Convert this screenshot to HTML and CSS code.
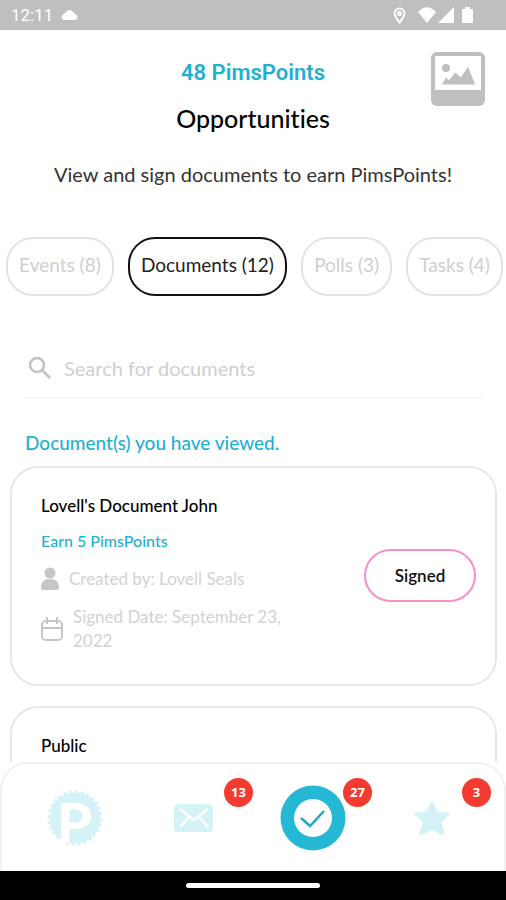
FILE: index.html
```html
<!DOCTYPE html>
<html lang="en">
<head>
    <meta charset="UTF-8">
    <meta name="viewport" content="width=device-width, initial-scale=1.0">
    <title>Opportunities</title>
    <link rel="stylesheet" href="styles.css">
</head>
<body>
    <div class="status-bar">
        <span class="clock">12:11</span>
        <svg class="cloud" width="17" height="12" viewBox="0 0 17 12" fill="#fff"><path d="M3 11a3 3 0 0 1-.5-5.800L6 2q2.500-2 5 0l3.500 3.200A3 3 0 0 1 14 11z"/></svg>
        <div class="status-icons">
            <svg width="13" height="17" viewBox="0 0 13 17" fill="none" stroke="#fff" stroke-width="2"><path d="M6.500 15.500C3.500 11.500 1.500 9 1.500 6.500a5 5 0 0 1 10 0c0 2.500-2 5-5 9z"/><circle cx="6.500" cy="6.500" r="1.500"/></svg>
            <svg class="wifi" width="18" height="17" viewBox="0 0 18 17" fill="#fff"><path d="M0 5q9-9.500 18 0L9 16z"/></svg>
            <svg width="16" height="17" viewBox="0 0 16 17" fill="#fff"><path d="M16 0v16H0z"/></svg>
            <svg class="battery" width="11" height="17" viewBox="0 0 11 17" fill="#fff"><path d="M3 2V0h5v2h2q1 0 1 1v12q0 1-1 1H1q-1 0-1-1V3q0-1 1-1z"/></svg>
        </div>
    </div>

    <main class="content">
        <header class="header">
            <div class="heading">
                <p class="points">48 PimsPoints</p>
                <h1>Opportunities</h1>
            </div>
            <button class="photo" type="button" aria-label="Photo">
                <svg width="54" height="54" viewBox="0 0 54 54"><rect width="54" height="54" rx="6" fill="#bfbfbf"/><path d="M4 4h46v34H4z" fill="#fff"/><circle cx="15" cy="16" r="4" fill="#bfbfbf"/><path d="M11 32.500l4-7 3 3 6-8 6 5 7-11 7 18z" fill="#bfbfbf"/></svg>
            </button>
        </header>
        <p class="intro">View and sign documents to earn PimsPoints!</p>

        <div class="tabs">
            <button class="tab" type="button">Events (8)</button>
            <button class="tab active" type="button">Documents (12)</button>
            <button class="tab" type="button">Polls (3)</button>
            <button class="tab" type="button">Tasks (4)</button>
        </div>

        <div class="search">
            <label for="search" aria-label="Search for documents">
                <svg width="24" height="24" viewBox="0 0 24 24" fill="none" stroke="#c2c2c2" stroke-width="2.500"><circle cx="9" cy="9" r="7"/><path d="M14 14l8 8"/></svg>
            </label>
            <input id="search" type="text" placeholder="Search for documents">
        </div>

        <h2>Document(s) you have viewed.</h2>

        <div class="card">
            <div class="details">
                <h3>Lovell's Document John</h3>
                <p class="earn">Earn 5 PimsPoints</p>
                <p class="meta">
                    <svg width="18" height="24" viewBox="0 0 18 24" fill="#c6c6c6"><circle cx="9" cy="6" r="5.500"/><path d="M0 21c0-6 3-9 9-9s9 3 9 9q0 2-2 2H2q-2 0-2-2z"/></svg>
                    <span>Created by: Lovell Seals</span>
                </p>
                <p class="meta">
                    <svg width="22" height="24" viewBox="0 0 22 24" fill="none" stroke="#c6c6c6" stroke-width="2"><rect x="1" y="4" width="20" height="19" rx="4"/><path d="M1 11h20M6 0v7M16 0v7"/></svg>
                    <span>Signed Date: September 23, 2022</span>
                </p>
            </div>
            <button class="signed" type="button">Signed</button>
        </div>

        <div class="card">
            <div class="details">
                <h3>Public</h3>
            </div>
        </div>
    </main>

    <nav class="nav">
        <a href="#" aria-label="Home">
            <svg class="logo" width="56" height="56" viewBox="0 0 56 56">
                <circle cx="28" cy="28" r="25.500" fill="#d5f2f6"/>
                <circle cx="28" cy="28" r="26" fill="none" stroke="#d5f2f6" stroke-width="3" pathLength="56" stroke-dasharray="1 1"/>
                <text class="logo-letter" x="10" y="53">P</text>
            </svg>
        </a>
        <a href="#" aria-label="Messages">
            <svg width="40" height="28" viewBox="0 0 40 28"><rect width="39" height="28" rx="4" fill="#d5f2f6"/><path d="M6 5l14 11L34 5M6 23l9-10M34 23l-9-10" fill="none" stroke="#fff" stroke-width="2.500"/></svg>
            <span class="badge">13</span>
        </a>
        <a href="#" aria-label="Opportunities">
            <svg width="66" height="66" viewBox="0 0 66 66"><circle cx="33" cy="33" r="32.500" fill="#25b8d5"/><circle cx="33" cy="33" r="19" fill="#fff"/><path d="M21 33l9 8 14-15" fill="none" stroke="#25a5c0" stroke-width="2.500"/></svg>
            <span class="badge">27</span>
        </a>
        <a href="#" aria-label="Favorites">
            <svg width="36" height="34" viewBox="0 0 36 34" fill="#d5f2f6" stroke="#d5f2f6" stroke-width="2" stroke-linejoin="round"><path d="M18 1l4.500 10.500L35 12.500l-8.500 8L29.500 33 18 28 6.500 33l3-12.500-8.500-8 12.500-1z"/></svg>
            <span class="badge">3</span>
        </a>
    </nav>
    <div class="system-bar"><div class="home-handle"></div></div>
</body>
</html>
```
FILE: styles.css
```css
* {
    box-sizing: border-box;
}

body {
    display: flex;
    flex-direction: column;
    height: 100vh;
    margin: 0;
    font-family: Lato, "Open Sans", sans-serif;
    font-variant-ligatures: none;
    background-color: #fff;
    color: #000;
}

h1, h2, h3, p {
    margin: 0;
}

button {
    font-family: inherit;
    background: none;
    cursor: pointer;
}

svg {
    display: block;
    flex-shrink: 0;
}

.status-bar {
    display: flex;
    align-items: center;
    flex-shrink: 0;
    height: 30px;
    padding: 0 33px 0 11px;
    background-color: #bfbfbf;
    color: #fff;
}

.clock {
    font-family: Roboto, sans-serif;
    font-size: 17px;
    margin-right: 8px;
}

.status-icons {
    display: flex;
    margin-left: auto;
}

.wifi {
    margin: 0 2px 0 12px;
}

.battery {
    margin-left: 8px;
}

.content {
    flex: 1;
    min-height: 0;
    overflow-y: auto;
    scrollbar-width: none;
}

.header {
    display: grid;
    grid-template-columns: 1fr auto 1fr;
    padding: 22px 21px 0;
}

.heading {
    grid-column: 2;
    padding-top: 6px;
    text-align: center;
}

.points {
    font-family: Roboto, sans-serif;
    font-size: 22px;
    font-weight: 600;
    line-height: 30px;
    color: #1fb1d0;
}

h1 {
    margin-top: 13px;
    font-size: 25px;
    font-weight: 500;
    line-height: 34px;
}

.photo {
    justify-self: end;
    align-self: start;
    padding: 0;
    border: 0;
}

.intro {
    margin-top: 26px;
    font-size: 20px;
    line-height: 26px;
    text-align: center;
    color: #333;
}

.tabs {
    display: flex;
    gap: 14px;
    margin-top: 50px;
    padding: 0 3px 0 6px;
}

.tab {
    flex: 1 0 auto;
    height: 59px;
    padding: 0 9px 4px;
    border: 2px solid #e2e2e2;
    border-radius: 27px;
    font-size: 19px;
    color: #cfcfcf;
}

.tab.active {
    border-color: #111;
    color: #222;
}

.search {
    display: flex;
    align-items: center;
    gap: 12px;
    height: 60px;
    margin: 43px 24px 0 25px;
    padding-left: 3px;
    border-bottom: 2px solid #f5f5f5;
}

.search input {
    flex: 1;
    padding: 0;
    border: 0;
    outline: 0;
    font-family: inherit;
    font-size: 20px;
}

.search input::placeholder {
    color: #cfcfcf;
}

h2 {
    margin: 31px 25px 10px;
    font-size: 19px;
    font-weight: 500;
    line-height: 26px;
    color: #1fb1d0;
}

.card {
    display: flex;
    align-items: center;
    justify-content: space-between;
    min-height: 220px;
    margin: 0 9px 20px 10px;
    padding: 26px 19px 27px 29px;
    border: 2px solid #e7e7e7;
    border-radius: 28px;
}

.details {
    align-self: flex-start;
    width: 248px;
}

h3 {
    font-size: 17px;
    font-weight: 500;
    line-height: 24px;
}

.earn {
    margin-top: 11px;
    font-size: 16px;
    font-weight: 500;
    line-height: 24px;
    color: #1fb1d0;
}

.meta {
    display: flex;
    align-items: center;
    gap: 10px;
    margin-top: 14px;
    font-size: 17px;
    line-height: 24px;
    color: #d2d2d2;
}

.signed {
    width: 112px;
    height: 53px;
    border: 2px solid #f88fc8;
    border-radius: 27px;
    font-size: 17px;
    font-weight: 600;
    color: #111;
}

.nav {
    display: grid;
    grid-template-columns: repeat(4, 1fr);
    flex-shrink: 0;
    height: 109px;
    padding: 0 13px;
    border: 2px solid #f1f1f1;
    border-bottom: 0;
    border-radius: 28px 28px 0 0;
}

.nav a {
    position: relative;
    display: flex;
    align-items: center;
    justify-content: center;
    text-decoration: none;
}

.logo {
    overflow: visible;
}

.logo-letter {
    font-size: 56px;
    font-weight: 900;
    fill: #fff;
}

.badge {
    position: absolute;
    top: 14px;
    right: 0;
    width: 29px;
    height: 29px;
    border-radius: 50%;
    background-color: #f33b2f;
    color: #fff;
    font-family: "Open Sans", sans-serif;
    font-size: 13px;
    font-weight: 700;
    line-height: 29px;
    text-align: center;
}

.system-bar {
    display: flex;
    align-items: center;
    justify-content: center;
    flex-shrink: 0;
    height: 29px;
    background-color: #000;
}

.home-handle {
    width: 134px;
    height: 5px;
    border-radius: 3px;
    background-color: #fff;
}
```
